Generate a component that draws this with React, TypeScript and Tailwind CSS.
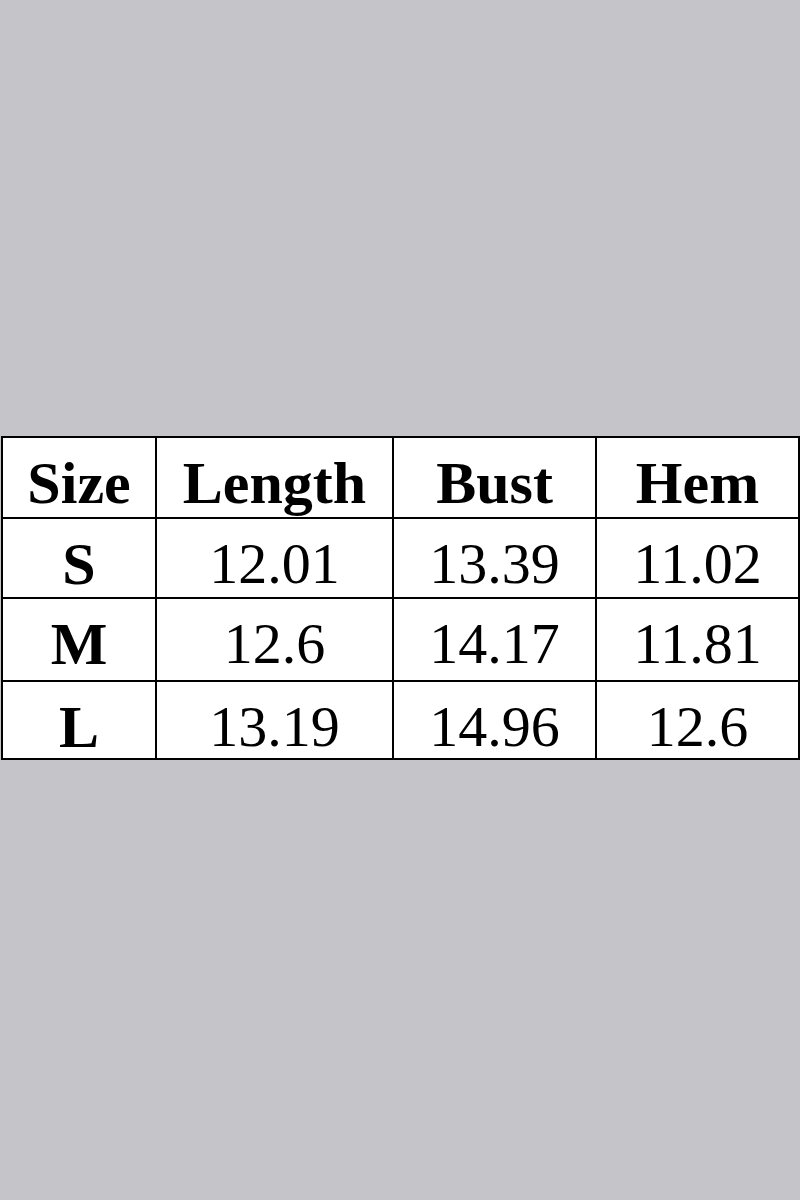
const rows = [
  { size: "S", length: "12.01", bust: "13.39", hem: "11.02", h: "h-[80px]" },
  { size: "M", length: "12.6", bust: "14.17", hem: "11.81", h: "h-[83px]" },
  { size: "L", length: "13.19", bust: "14.96", hem: "12.6", h: "h-[78px]" },
];

const cell = "border-2 border-black p-0 text-center align-top leading-none";
const bold = `${cell} pt-[15px] text-[60px] font-bold`;
const num = `${cell} pt-[16px] text-[58px]`;

export default function App() {
  return (
    <div className="min-h-[1200px] w-[800px] bg-[#c5c4c9] pt-[436px] pl-[1px]" style={{ fontFamily: '"Liberation Serif", "Times New Roman", serif' }}>
      <table className="table-fixed border-collapse bg-white text-black w-[797px]">
        <colgroup>
          <col className="w-[154px]" />
          <col className="w-[237px]" />
          <col className="w-[203px]" />
          <col className="w-[203px]" />
        </colgroup>
        <thead>
          <tr className="h-[81px]">
            {["Size", "Length", "Bust", "Hem"].map((t) => (
              <th key={t} className={bold}>
                {t}
              </th>
            ))}
          </tr>
        </thead>
        <tbody>
          {rows.map((r) => (
            <tr key={r.size} className={r.h}>
              <td className={bold}>{r.size}</td>
              <td className={num}>{r.length}</td>
              <td className={num}>{r.bust}</td>
              <td className={num}>{r.hem}</td>
            </tr>
          ))}
        </tbody>
      </table>
    </div>
  );
}
